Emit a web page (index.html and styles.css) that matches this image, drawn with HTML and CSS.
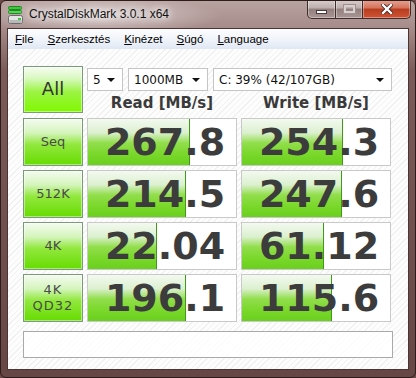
FILE: index.html
```html
<!DOCTYPE html>
<html lang="en">
<head>
    <meta charset="UTF-8">
    <title>CrystalDiskMark 3.0.1 x64</title>
    <link rel="stylesheet" href="styles.css">
</head>
<body>
<div class="window">
    <div class="titlebar">
        <svg class="app-icon" width="15" height="19" viewBox="0 0 15 19">
            <rect x="0.5" y="0.5" width="13" height="3" rx="1" fill="#3ec43e" stroke="#1f8a1f"/>
            <rect x="0.5" y="4.5" width="13" height="3" rx="1" fill="#5ad25a" stroke="#1f8a1f"/>
            <rect x="0.5" y="9.5" width="14" height="8" rx="2" fill="#e4e4e4" stroke="#6a6a6a"/>
            <rect x="1.5" y="14" width="12" height="3" fill="#b8b8b8"/>
            <rect x="10" y="12" width="3" height="2" fill="#3ec43e"/>
        </svg>
        <span class="title">CrystalDiskMark 3.0.1 x64</span>
        <div class="caption-buttons">
            <div class="cap cap-min"><span class="min-glyph"></span></div>
            <div class="cap cap-max"><span class="max-glyph"></span></div>
            <div class="cap cap-close">
                <svg width="12" height="10" viewBox="0 0 12 10">
                    <path d="M2 1 L10 9 M10 1 L2 9" stroke="#3a2020" stroke-width="4" stroke-linecap="square"/>
                    <path d="M2 1 L10 9 M10 1 L2 9" stroke="#ffffff" stroke-width="2.4" stroke-linecap="square"/>
                </svg>
            </div>
        </div>
    </div>
    <div class="client">
        <div class="menubar">
            <span><u>F</u>ile</span>
            <span><u>S</u>zerkesztés</span>
            <span><u>K</u>inézet</span>
            <span><u>S</u>úgó</span>
            <span><u>L</u>anguage</span>
        </div>
        <div class="content">
            <div class="grid">
                <div class="btn btn-all">All</div>
                <div class="top">
                    <div class="selects">
                        <div class="select sel-count">5<i class="arrow"></i></div>
                        <div class="select sel-size">1000MB<i class="arrow"></i></div>
                        <div class="select sel-drive">C: 39% (42/107GB)<i class="arrow"></i></div>
                    </div>
                    <div class="heads">
                        <div class="head">Read [MB/s]</div>
                        <div class="head">Write [MB/s]</div>
                    </div>
                </div>

                <div class="btn">Seq</div>
                <div class="cell"><div class="bar" style="width: 68.7%"></div><span class="val">267.8</span></div>
                <div class="cell"><div class="bar" style="width: 68%"></div><span class="val">254.3</span></div>

                <div class="btn">512K</div>
                <div class="cell"><div class="bar" style="width: 66%"></div><span class="val">214.5</span></div>
                <div class="cell"><div class="bar" style="width: 67.3%"></div><span class="val">247.6</span></div>

                <div class="btn">4K</div>
                <div class="cell"><div class="bar" style="width: 46.7%"></div><span class="val">22.04</span></div>
                <div class="cell"><div class="bar" style="width: 55.3%"></div><span class="val">61.12</span></div>

                <div class="btn btn-two">4K<br>QD32</div>
                <div class="cell"><div class="bar" style="width: 66%"></div><span class="val">196.1</span></div>
                <div class="cell"><div class="bar" style="width: 60.7%"></div><span class="val">115.6</span></div>
            </div>
            <div class="status"></div>
        </div>
    </div>
</div>
</body>
</html>
```

FILE: styles.css
```css
html, body {
    margin: 0;
    padding: 0;
    background: #6a4a48;
}
.window {
    width: 416px;
    height: 378px;
    box-sizing: border-box;
    border: 1px solid #2e1c1b;
    border-radius: 6px;
    padding: 0 6px 7px 6px;
    overflow: hidden;
    background:
        radial-gradient(ellipse 120px 20px at 100px 15px, rgba(255,255,255,.55), rgba(255,255,255,0)),
        linear-gradient(180deg, #b8a3a1 0, #a68c8a 26px, #7a5b59 70px, #674745 100%);
    font-family: "Liberation Sans", Arial, sans-serif;
}

/* title bar */
.titlebar {
    height: 27px;
    display: flex;
    align-items: flex-start;
}
.app-icon {
    margin: 5px 0 0 1px;
    flex: none;
}
.title {
    margin: 6px 0 0 6px;
    font-size: 12px;
    color: #111;
    text-shadow: 0 0 6px #fff, 0 0 10px #fff;
    flex: 1;
}
.caption-buttons {
    display: flex;
    margin: -1px -2px 0 0;
}
.cap {
    height: 18px;
    border: 1px solid #3f2d2c;
    border-top: none;
    display: flex;
    align-items: center;
    justify-content: center;
    box-shadow: inset 0 0 0 1px rgba(255,255,255,.35);
    background: linear-gradient(180deg, #d9cfce 0, #bcaeac 45%, #93807e 50%, #a99694 100%);
}
.cap-min {
    width: 27px;
    border-bottom-left-radius: 5px;
}
.cap-max {
    width: 26px;
    border-left: none;
}
.cap-close {
    width: 47px;
    border-left: none;
    border-bottom-right-radius: 5px;
    background: linear-gradient(180deg, #e7a394 0, #d4725a 45%, #b83c1f 50%, #cf5434 100%);
}
.min-glyph {
    width: 9px;
    height: 2px;
    margin-top: 6px;
    background: #fff;
    border: 1px solid #4a3a3a;
}
.max-glyph {
    width: 7px;
    height: 4px;
    border: 2px solid #d8d0cf;
    outline: 1px solid #a0908f;
}

/* client area */
.client {
    border: 1px solid #4a3533;
    background: #fbfbfb;
}
.menubar {
    height: 20px;
    display: flex;
    align-items: center;
    gap: 14px;
    padding-left: 7px;
    font-size: 11.5px;
    color: #000;
    background: linear-gradient(180deg, #fdfdfe 0, #eef2f9 60%, #dfe7f3 100%);
}
.menubar u {
    text-decoration-thickness: 1px;
    text-underline-offset: 1px;
}
.content {
    height: 320px;
    box-sizing: border-box;
    padding: 17px 0 0 15px;
    background:
        repeating-linear-gradient(135deg, #fdfdfd 0, #fdfdfd 3px, #f1f1f1 3px, #f1f1f1 4px);
}
.grid {
    display: grid;
    grid-template-columns: 60px 150px 151px;
    grid-template-rows: 48px 48px 48px 48px 48px;
    column-gap: 4px;
    row-gap: 4px;
}

/* left buttons */
.btn {
    box-sizing: border-box;
    border: 1px solid #7c9a7a;
    box-shadow: inset 0 0 0 1px rgba(255,255,255,.45);
    background: linear-gradient(180deg, #f4fbf0 0, #d4f5bc 30%, #92e83e 55%, #66dc00 100%);
    display: flex;
    align-items: center;
    justify-content: center;
    text-align: center;
    font-family: "DejaVu Sans", sans-serif;
    font-size: 13px;
    color: #4a4a4a;
    line-height: 1.25;
}
.btn-all {
    height: 47px;
    font-size: 18px;
    color: #333;
    background: linear-gradient(180deg, #f6fcf2 0, #d8f9c0 25%, #9cf445 55%, #80f800 100%);
}
.btn-two {
    font-size: 13px;
    letter-spacing: 1px;
}

/* top controls */
.top {
    grid-column: 2 / 4;
    display: flex;
    flex-direction: column;
}
.selects {
    display: flex;
    gap: 5px;
    margin-top: 2px;
}
.select {
    height: 23px;
    box-sizing: border-box;
    border: 1px solid #c5c5c5;
    background: #fff;
    display: flex;
    align-items: center;
    padding-left: 5px;
    position: relative;
    font-family: "DejaVu Sans", sans-serif;
    font-size: 12px;
    color: #111;
}
.sel-count { width: 36px; }
.sel-size { width: 80px; }
.sel-drive { width: 179px; }
.arrow {
    position: absolute;
    right: 7px;
    top: 9px;
    width: 0;
    height: 0;
    border-left: 4px solid transparent;
    border-right: 4px solid transparent;
    border-top: 4px solid #111;
}
.heads {
    display: flex;
    gap: 4px;
    flex: 1;
}
.head {
    width: 150px;
    text-align: center;
    font-family: "DejaVu Sans", sans-serif;
    font-weight: bold;
    font-size: 15px;
    color: #3a3a3a;
    padding-top: 3px;
}

/* result cells */
.cell {
    position: relative;
    box-sizing: border-box;
    width: 150px;
    border: 1px solid #c9c9c9;
    background: #fff;
    display: flex;
    align-items: center;
    justify-content: center;
    padding-left: 6px;
}
.bar {
    position: absolute;
    left: 0;
    top: 0;
    bottom: 0;
    box-sizing: border-box;
    border-right: 1px solid #3f9a1a;
    background: linear-gradient(180deg, #f3f9f0 0, #dcf0cf 30%, #92de4c 52%, #7bd82c 75%, #6ad01e 100%);
}
.val {
    position: relative;
    font-family: "DejaVu Sans", sans-serif;
    font-weight: bold;
    font-size: 38px;
    line-height: 1;
    color: #3c3c3c;
}

.status {
    width: 370px;
    height: 27px;
    box-sizing: border-box;
    margin-top: 9px;
    border: 1px solid #a9a9a9;
    background: rgba(255,255,255,.75);
}
```
